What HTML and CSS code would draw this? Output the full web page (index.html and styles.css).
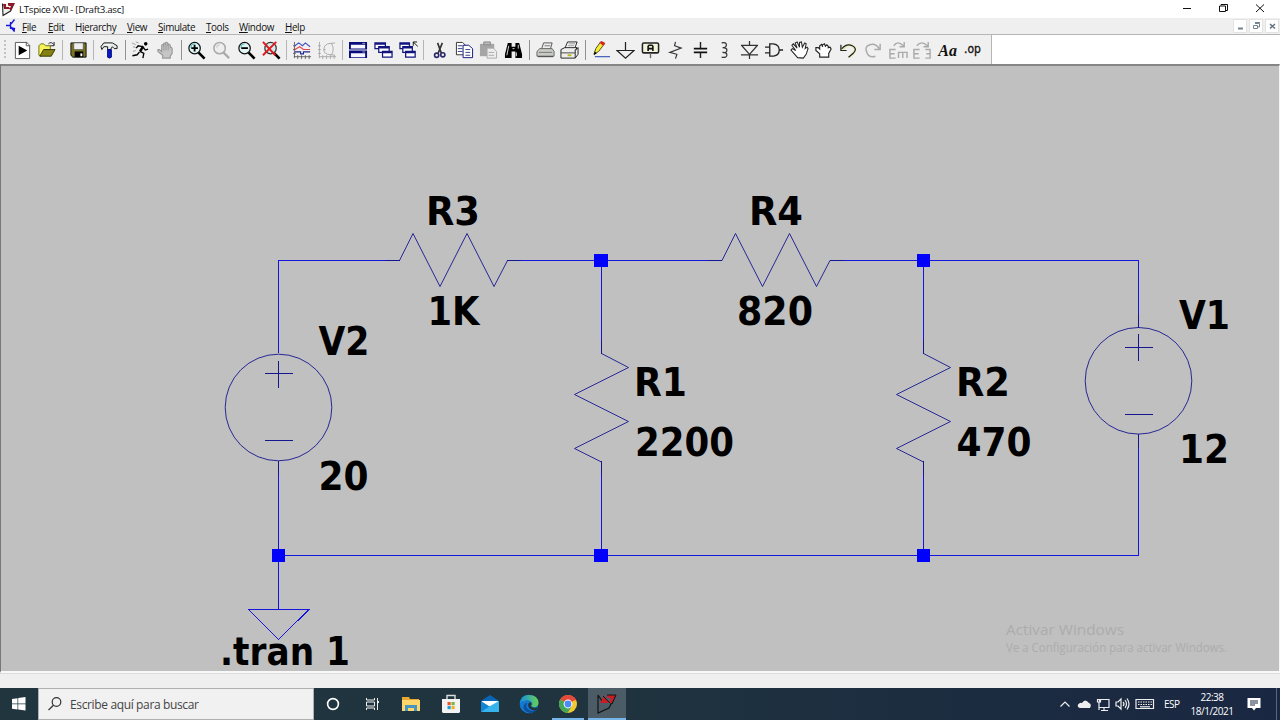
FILE: index.html
```html
<!DOCTYPE html>
<html lang="es">
<head>
<meta charset="utf-8">
<title>LTspice XVII - [Draft3.asc]</title>
<link rel="stylesheet" href="styles.css">
</head>
<body>
<div class="app">
<header class="titlebar">
  <svg class="logo" width="14" height="16" viewBox="0 0 14 16"><path d="M1.5 2.5 2 14.5 9.5 10 13 2.5" fill="#eee" stroke="#222" stroke-width="1.1"/><path d="M2 3H5L5 6H9V8H3ZM7 2H14L12.5 4.5 10 10 8.5 8 10 5H7Z" fill="#8e1824"/><path d="M5 2 9 7" stroke="#fff" stroke-width=".7"/></svg>
  <span class="title">LTspice XVII - [Draft3.asc]</span>
  <svg class="window-controls" width="90" height="18" viewBox="0 0 90 18" fill="none" stroke="#111"><path d="M3 8.5H11"/><path d="M39.5 6H45.5V11.5H39.5ZM41 5.5V4.5H47.5V10.5H46"/><path d="m76 4.500 8 7.500m0-7.500-8 7.500"/></svg>
</header>
<nav class="menubar">
  <svg class="doc-icon" width="12" height="16" viewBox="0 0 12 16" fill="none" stroke="#1515d8" stroke-width="1.3"><path d="M1 7.500H5M5.500 4V11M6 6 9.500 1.500M6 9 9.500 13.500"/><path d="m6.500 10 3 .5-.5 2Z" fill="#1515d8"/></svg>
  <span class="m1"><u>F</u>ile</span><span class="m2"><u>E</u>dit</span><span class="m3">H<u>i</u>erarchy</span><span class="m4"><u>V</u>iew</span><span class="m5"><u>S</u>imulate</span><span class="m6"><u>T</u>ools</span><span class="m7"><u>W</u>indow</span><span class="m8"><u>H</u>elp</span>
  <div class="child-controls">
    <i><svg width="13" height="14" viewBox="0 0 13 14"><path d="M4 9.500H9" stroke="#748291" stroke-width="2"/></svg></i>
    <i><svg width="13" height="14" viewBox="0 0 13 14" fill="none" stroke="#748291"><path d="M3.500 6.500H7.500V9.500H3.500ZM5 4.500H9.500V8H8M5 3.500H10"/></svg></i>
    <i><svg width="13" height="14" viewBox="0 0 13 14"><path d="m4 5 5 4.500M9 5 4 9.500" stroke="#667585" stroke-width="1.600"/></svg></i>
  </div>
</nav>
<div class="toolbar"><div class="tools">
  <b class="grip"></b>
  <span class="tool"><svg viewBox="0 0 20 20"><path d="M2.500 1.500H14.500L17.500 4.500V18.500H2.500Z" fill="#fff" stroke="#555"/><path d="M14 1V5H18" fill="none" stroke="#555"/><path d="M6 5V15L15 10Z"/></svg></span>
  <span class="tool"><svg viewBox="0 0 20 20"><path d="M2 15V5L4 3H7L9 5H14V9H8L4 16Z" fill="#f7f35a" stroke="#6f6f10"/><path d="M7 9H19L15 16H3Z" fill="#858014" stroke="#383800"/><path d="M12 3Q15 0 18 4M18 1V5H14" fill="none" stroke="#222"/></svg></span>
  <i class="sep light"></i>
  <span class="tool"><svg viewBox="0 0 20 20"><path d="M2 2H18V17H4L2 15Z" fill="#77731c" stroke="#111"/><path d="M5 2H15V9H5Z" fill="#eee" stroke="#444" stroke-width=".6"/><path d="M6 11H15V17H6Z"/><path d="M12 13H14V16H12Z" fill="#fff"/></svg></span>
  <i class="sep light"></i>
  <span class="tool"><svg viewBox="0 0 20 20"><path d="M1 6 4 2H13L18 5V8H15L13 6 11 9H8V6H4L2 9Z" fill="#e6ebeb" stroke="#111"/><path d="M8 9H12V17Q10 19 8 17Z" fill="#0918ce" stroke="#001378"/><path d="M6 4H12" stroke="#fff"/></svg></span>
  <i class="sep"></i>
  <span class="tool"><svg viewBox="0 0 20 20"><circle cx="15.500" cy="3" r="1.900"/><path d="M13 5.500 9.500 11" stroke="#000" stroke-width="2.600"/><path d="m9.500 11 4 2-1 5M9 11.500l-2.500 3-5 1M12 6 7.500 5 5.500 7.500M13 7l2 2.500 3-1" fill="none" stroke="#000" stroke-width="1.400"/><path d="m1 2 4 2M2 6l3 1M5 1l3 1M2 11l3-1" stroke="#888" fill="none" stroke-width=".8"/></svg></span>
  <span class="tool"><svg viewBox="0 0 20 20"><path d="M7 18V15L2 11V9H3.500L6 11V4.500Q7 3 8 4.500V3Q9 1.500 10 3V2Q11.500.5 12.500 2.500V4Q14 2.500 15 4.500V7Q16.500 6 17 8V13L15 16V18Z" fill="#c5c5c5" stroke="#999" stroke-width="1.200"/><path d="M8.300 4V10M10.500 3V10M12.800 4V10" stroke="#999" stroke-width="1"/></svg></span>
  <i class="sep"></i>
  <span class="tool"><svg viewBox="0 0 20 20"><path d="m12 12 6.500 6.500" stroke="#000" stroke-width="2.800"/><circle cx="8" cy="7.500" r="6" fill="#e1f6f5" stroke="#111" stroke-width="1.300"/><path d="M4 7Q4 3 8 3" fill="none" stroke="#39bcbc"/><path d="M4.500 7.500H11.500M8 4V11" stroke="#000" stroke-width="1.900"/></svg></span>
  <span class="tool"><svg viewBox="0 0 20 20"><path d="m12 12 6 6" stroke="#aaa" stroke-width="2.400"/><circle cx="8" cy="7.500" r="6" fill="#eee" stroke="#aaa" stroke-width="1.600"/><path d="M5 7Q5 4 8 4" fill="none" stroke="#bbb"/></svg></span>
  <span class="tool"><svg viewBox="0 0 20 20"><path d="m12 12 6.500 6.500" stroke="#000" stroke-width="2.800"/><circle cx="8" cy="7.500" r="6" fill="#e1f6f5" stroke="#111" stroke-width="1.300"/><path d="M4 7Q4 3 8 3" fill="none" stroke="#39bcbc"/><path d="M4.500 7.500H11.500" stroke="#000" stroke-width="1.900"/></svg></span>
  <span class="tool"><svg viewBox="0 0 20 20"><path d="m12 12 6.500 6.500" stroke="#000" stroke-width="2.800"/><circle cx="9" cy="7.500" r="6" fill="#d2eceb" stroke="#333" stroke-width="1.300"/><path d="M1 1 14 15M15 1 1 15" stroke="#e3171c" stroke-width="2"/></svg></span>
  <i class="sep light"></i>
  <span class="tool"><svg viewBox="0 0 20 20"><path d="M1.500 1V18M1 16.500H19M0 5H3M0 9H3M0 13H3M5 15V19M9 15V19M13 15V19M17 15V19" stroke="#555" stroke-width=".9"/><g fill="none" stroke-width="1.200"><path d="m2 5 4-3 4 3 3-3 5 4" stroke="#4051c1"/><path d="M2 9 7 6l4 3h7" stroke="#e4454c"/><path d="M2 11.500H8V13.500H11V11.500H18" stroke="#1e298f"/></g></svg></span>
  <span class="tool"><svg viewBox="0 0 20 20" fill="none" stroke="#aaa"><path d="M1.500 1V18M1 16.500H19M0 5H3M0 9H3M0 13H3M5 15V19M9 15V19M13 15V19M17 15V19"/><path d="M18 2 10 3Q6 5 6 9T10 14L18 15M14 2Q18 9 14 15M6 9H8"/></svg></span>
  <i class="sep light"></i>
  <span class="tool"><svg viewBox="0 0 20 20"><path d="M0 1H19V9H0ZM0 10H19V18H0Z" fill="#070b7c"/><path d="M2 4H17V8H2ZM2 13H17V17H2Z" fill="#f7f7ff"/><path d="M14 2.500h3M14 11.500h3" stroke="#aaa"/></svg></span>
  <span class="tool"><svg viewBox="0 0 20 20"><g fill="#fff" stroke="#11147f" stroke-width="1.300"><path d="M1 2H12V8H1Z"/><path d="M5 6H16V12H5Z"/><path d="M9 11H19V17H9Z"/></g><path d="M1 3H12M5 7H16M9 12H19" stroke="#11147f" stroke-width="2"/></svg></span>
  <span class="tool"><svg viewBox="0 0 20 20"><g fill="#fff" stroke="#11147f" stroke-width="1.300"><path d="M1 2H11V8H1Z"/><path d="M4 6H14V12H4Z"/><path d="M7 11H17V17H7Z"/></g><path d="M1 3H11M4 7H14M7 12H17" stroke="#11147f" stroke-width="2"/><path d="M15 5V1H19M15 1 20 6" stroke="#111" fill="none"/></svg></span>
  <i class="sep light"></i>
  <span class="tool"><svg viewBox="0 0 20 20" fill="none" stroke="#292967" stroke-width="1.700"><path d="m8 2 4 11M13 2 8.500 13" stroke="#333"/><circle cx="7" cy="15" r="2.200"/><circle cx="13.500" cy="14.500" r="2.200"/></svg></span>
  <span class="tool"><svg viewBox="0 0 20 20"><g fill="#fff"><path d="M1.500 1.500H8L11 4.500V14.500H1.500Z" stroke="#333"/><path d="M8.500 4.500H14.500L18.500 8V17.500H8.500Z" stroke="#11147f"/></g><path d="M3 5H8M3 8H8M3 11H8M11 9H16M11 12H16M11 15H16" stroke="#333c83"/></svg></span>
  <span class="tool"><svg viewBox="0 0 20 20"><path d="M1 3H16V16H1Z" fill="#a5a5a5"/><path d="M5 1H12V4H5Z" fill="#bbb" stroke="#888"/><path d="M8.500 7.500H15L18.500 11V18H8.500Z" fill="#eee" stroke="#aaa"/><path d="M10 12H16M10 15H16" stroke="#aaa"/></svg></span>
  <span class="tool"><svg viewBox="0 0 20 20"><path d="M4 2H8V6H12V2H16L19 14V18H12V11H8V18H1V14Z"/><path d="M5 5 3 15M15 4V8M13 12V16M9 8H11" stroke="#ddd"/></svg></span>
  <i class="sep"></i>
  <span class="tool"><svg viewBox="0 0 20 20"><path d="M6 8 8 2H17L15 9" fill="#eee" stroke="#555"/><path d="M4 8H17L19 11V16H1V11Z" fill="#c8cac4" stroke="#666"/><path d="M3 12H17M9 5H15" stroke="#777"/><path d="M2 16.500H18" stroke="#444"/></svg></span>
  <span class="tool"><svg viewBox="0 0 20 20"><path d="M5 8 8 1H18L15 9" fill="#fff" stroke="#222"/><path d="m1 9 4-2H18L16 10V18H1ZM16 10 19 7V14L16 18" fill="#eee" stroke="#222"/><path d="M1 12.500H16" stroke="#444"/><path d="M9 3H16M8 5H15" stroke="#777" stroke-width=".8"/><path d="M8 15H12" stroke="#b6bb18" stroke-width="2"/></svg></span>
  <i class="sep"></i>
  <span class="tool"><svg viewBox="0 0 20 20"><path d="M2 14 4 8 9 1 13 3 7 11Z" fill="#f5ed36" stroke="#4e4a13"/><path d="m8 2 2-2 4 2-2 3Z" fill="#d8211d"/><path d="m2 15 1-4 2 2Z"/><path d="M3 16.500H19" stroke="#3655b8" stroke-width="1.200"/></svg></span>
  <span class="tool"><svg viewBox="0 0 20 20"><path d="M10 1V10M1 10H19L10 18Z" fill="none" stroke="#222" stroke-width="1.300"/></svg></span>
  <span class="tool"><svg viewBox="0 0 20 20"><rect x="1.500" y="2" width="17" height="10.500" rx="1.500" fill="#f1f3dc" stroke="#222" stroke-width="1.600"/><path d="M7.500 10.500V5.500L8.500 4.500H11.500L12.500 5.500V10.500M8 8H12" stroke="#111" stroke-width="1.700" fill="none"/><path d="M10 13V18" stroke="#666" stroke-width="1.400"/></svg></span>
  <span class="tool"><svg viewBox="0 0 20 20"><path d="M10 1 9 5 16 7.500 4 12 11.500 14 10 18.500" fill="none" stroke="#333" stroke-width="1.200"/></svg></span>
  <span class="tool"><svg viewBox="0 0 20 20"><path d="M10 1V8M10 12V18" stroke="#222" stroke-width="1.500"/><path d="M3 8H17M3 12H17" stroke="#111" stroke-width="2"/></svg></span>
  <span class="tool"><svg viewBox="0 0 20 20"><path d="M7 2Q12 1 12 4T8 7Q13 7 12.500 10T8 12Q13 12 12.500 15T7 17" fill="none" stroke="#333" stroke-width="1.300"/></svg></span>
  <span class="tool"><svg viewBox="0 0 20 20"><path d="M1 4.500H19M2 5 10 14 18 5M1 14.500H19M10 0V5M10 14V19" fill="none" stroke="#333" stroke-width="1.300"/></svg></span>
  <span class="tool"><svg viewBox="0 0 20 20"><path d="M0 6.500H5M0 12.500H5M5 3H9Q15 4 15 9.500T9 16H5ZM15 9.500H19" fill="none" stroke="#222" stroke-width="1.400"/></svg></span>
  <span class="tool"><svg viewBox="0 0 20 20"><path d="M8 17.500 5 14 1 9.500 2.500 8 6 10 2 4.500 3.500 3 7.500 7.500 5.500 2 7.500 1 10 6.500V1.500L12 1 13 6.500 15.500 2 17 3 16 8 18 6.500 19 8 17 14 14 18Z" fill="#fff" stroke="#222" stroke-width="1.100"/></svg></span>
  <span class="tool"><svg viewBox="0 0 20 20"><path d="M6 17V13.500L2 10V7L4.500 7 6 8.500V5L8 3.500 9 6V4L11 3 12 5.500 13.500 4 15 5.500V7L17 6.500 18 8.500 15.500 13V17Z" fill="#fff" stroke="#222" stroke-width="1.200"/></svg></span>
  <span class="tool"><svg viewBox="0 0 20 20" fill="none"><path d="M4 9Q9 2 14 5T15 13L11 17" stroke="#e5e69c" stroke-width="2.400"/><path d="M3 8Q8 2 14 5T15 13L10 17M2 4V10H8" stroke="#222" stroke-width="1.300"/></svg></span>
  <span class="tool"><svg viewBox="0 0 20 20" fill="none" stroke="#aaa" stroke-width="1.500"><path d="M16 8Q12 2 6 4T3 12Q5 18 12 16M17 3V9H11"/></svg></span>
  <span class="tool"><svg viewBox="0 0 20 20" fill="none" stroke="#aaa" stroke-width="1.500"><path d="M7 9H1V18H7M1 13.500H6M10 18V12H19V18M14.500 12V18M5 5Q9-1 15 5M16 1V6H11"/></svg></span>
  <span class="tool"><svg viewBox="0 0 20 20" fill="none" stroke="#aaa" stroke-width="1.500"><path d="M7 9H1V18H7M1 13.500H6M13 9H18V18H13M18 13.500H14M4 5Q9-1 15 5M16 1V6H11"/></svg></span>
  <span class="tool aa">Aa</span>
  <span class="tool op">.op</span>
</div></div>
<main class="workspace">
<svg class="schematic" width="1278" height="605" viewBox="1 66 1278 605">
  <g class="wire"><path d="M278.500 353V260.500H386M520 260.500H709M843 260.500H1138.500V314M278.500 474V608.500M278.500 555.500H1138.500V447M601.500 260V340M601.500 475V555M923.500 260V340M923.500 475V555"/></g>
  <g class="part straight"><path d="M386 260.500H400M507 260.500H521M708 260.500H722M830 260.500H844M601.500 340V354M601.500 461V475M923.500 340V354M923.500 461V475M278.500 461V475M1138.500 314V328M1138.500 434V448"/>
  <path d="M265 373.500H293M278.500 361V388M265 440.500H293M1125 347.500H1153M1138.500 334V361M1125 414.500H1153"/></g>
  <g class="part"><path d="m399.500 260.500 13.500-27 27 53 27-53 27 53 13.500-26M722 260.500l13.500-27 27 53 27-53 27 53 13.500-26"/>
  <path d="m601.500 353.500 27 14-54 27 54 27-54 27 27 13.500M923.500 353.500l27 14-54 27 54 27-54 27 27 13.500"/>
  <circle cx="278.500" cy="407.500" r="53.300"/><circle cx="1138.500" cy="380.800" r="53.300"/></g>
  <path class="wire" d="M248.500 609.500H309L278.500 639.500Z"/>
  <path class="node" d="M594 254h14v13h-14zM917 254h13v13h-13zM272 549h13v13h-13zM594 549h14v13h-14zM917 549h13v13h-13z"/>
  <g class="labels">
   <text x="426" y="225" textLength="54" lengthAdjust="spacingAndGlyphs">R3</text><text x="427.500" y="325" textLength="52" lengthAdjust="spacingAndGlyphs">1K</text>
   <text x="749" y="225" textLength="54" lengthAdjust="spacingAndGlyphs">R4</text><text x="737" y="325" textLength="76" lengthAdjust="spacingAndGlyphs">820</text>
   <text x="318.500" y="355" textLength="51" lengthAdjust="spacingAndGlyphs">V2</text><text x="318.500" y="490" textLength="50" lengthAdjust="spacingAndGlyphs">20</text>
   <text x="634" y="396" textLength="53" lengthAdjust="spacingAndGlyphs">R1</text><text x="635" y="456" textLength="99" lengthAdjust="spacingAndGlyphs">2200</text>
   <text x="956" y="396" textLength="54" lengthAdjust="spacingAndGlyphs">R2</text><text x="956.500" y="456" textLength="75" lengthAdjust="spacingAndGlyphs">470</text>
   <text x="1179" y="329" textLength="51" lengthAdjust="spacingAndGlyphs">V1</text><text x="1179" y="463" textLength="50" lengthAdjust="spacingAndGlyphs">12</text>
   <text x="220" y="665" textLength="130" lengthAdjust="spacingAndGlyphs">.tran 1</text>
  </g>
  <g class="activation"><text x="1006" y="635" font-size="15" textLength="118" lengthAdjust="spacingAndGlyphs">Activar Windows</text><text x="1006" y="652" font-size="12" textLength="221" lengthAdjust="spacingAndGlyphs">Ve a Configuración para activar Windows.</text></g>
</svg>
</main>
<div class="statusbar"></div>
<footer class="taskbar">
  <div class="start"><svg width="14" height="14" viewBox="0 0 14 14"><path d="M0 2 5.500 1.200V6.500H0ZM6.200 1.100 13.500 0V6.500H6.200ZM0 7.200H5.500V12.500L0 11.800ZM6.200 7.200H13.500V13.600L6.200 12.600Z" fill="#fff"/></svg></div>
  <div class="search"><svg width="16" height="16" viewBox="0 0 16 16" fill="none" stroke="#333" stroke-width="1.200"><circle cx="9.500" cy="6" r="4.300"/><path d="M6.500 9.200 1.500 14"/></svg><span>Escribe aquí para buscar</span></div>
  <div class="apps">
   <span class="app-btn"><svg viewBox="0 0 20 20"><circle cx="10" cy="10" r="5.400" fill="none" stroke="#fff" stroke-width="1.600"/></svg></span>
   <span class="app-btn"><svg viewBox="0 0 20 20" fill="none" stroke="#eee"><path d="M4.500 4V6H12.500V4M4.500 16V14H12.500V16M4.500 8H12.500V12H4.500ZM15.500 4V16"/><path d="M15 7H17V9H15Z" fill="#eee" stroke="none"/></svg></span>
   <span class="app-btn"><svg viewBox="0 0 20 20"><path d="M1 3H8L9 5H18V16H1Z" fill="#e6a831"/><path d="M1 6H19V17H1Z" fill="#ffd66b"/><path d="M4 17V11H16V17H13V14H7V17Z" fill="#4696c2"/></svg></span>
   <span class="app-btn"><svg viewBox="0 0 20 20"><path d="M6 6V1.500H14V6" fill="none" stroke="#ddd" stroke-width="1.400"/><path d="M1 5H19V18L18 19H2L1 18Z" fill="#f3f3f3"/><path d="M6.500 8H9.700V11.200H6.500Z" fill="#f05324"/><path d="M10.500 8H13.700V11.200H10.500Z" fill="#7cb83b"/><path d="M6.500 12H9.700V15.200H6.500Z" fill="#1ba1df"/><path d="M10.500 12H13.700V15.200H10.500Z" fill="#f2b51b"/></svg></span>
   <span class="app-btn"><svg viewBox="0 0 20 20"><path d="M1 7 10 1 19 7V18H1Z" fill="#0865b7"/><path d="M2 7H18V13H2Z" fill="#fff"/><path d="M1 7 12 14 1 18Z" fill="#1385d4"/><path d="M19 7V18H1L10 12Z" fill="#38b4ed"/></svg></span>
   <span class="app-btn"><svg viewBox="0 0 20 20"><defs><linearGradient id="edge"><stop stop-color="#168ee2"/><stop offset="1" stop-color="#66d354"/></linearGradient></defs><circle cx="10" cy="10" r="9.300" fill="#1479ce"/><path d="M1 10Q1 1 10 1 19 1 19.500 9 19 14 13 13 11 12 13 9 10 4 5 7 1 8 1 10Z" fill="url(#edge)"/><path d="M8 9Q5 15 13 17L18 15Q15 19 11 19 3 17 5 11 6 9 8 9Z" fill="#0b4e9b"/><path d="M11 8Q14 9 12 12 14 15 19 13L17 16Q9 17 9 10Z" fill="#203745"/></svg></span>
   <span class="app-btn running"><svg viewBox="0 0 20 20"><circle cx="10" cy="10" r="9" fill="#f4c631"/><path d="M10 10 2.200 5.500A9 9 0 0 1 17.800 5.500Z" fill="#e44a3b"/><path d="M10 10 2.200 5.500A9 9 0 0 0 9.500 19L14 12Z" fill="#43a65a"/><path d="M10 5.500H17.800" stroke="#e44a3b" stroke-width="1.500"/><circle cx="10" cy="10" r="4.400" fill="#fff"/><circle cx="10" cy="10" r="3.400" fill="#4c8bf5"/></svg></span>
   <span class="app-btn active"><svg viewBox="0 0 20 20"><path d="M1 1V19L12 14 18 2M1 1 5 7" fill="none" stroke="#111" stroke-width="1.200"/><path d="M3 9 6 4V1L10 6 12 9ZM10 1H19L15 9H12L14 4H10Z" fill="#c81b23"/><path d="m6 2 7 7M10 1H19L15 10" fill="none" stroke="#151515"/></svg></span>
  </div>
  <div class="tray">
   <svg width="102" height="22" viewBox="1058 693 102 22" fill="none" stroke="#eee" stroke-width="1.200"><path d="m1060.500 706.500 4.500-4.500 4.500 4.500"/><path d="M1080 708Q1077 707 1078 704.500 1080 702 1082 703 1085 698 1089 703 1092 704 1090 708Z" fill="#eee" stroke="none"/><path d="M1099.500 702V699.500H1109V707.500H1099.500M1104 708V710.500M1101 710.500H1108M1097.500 699.500H1100.500V702H1097.500ZM1099 702V710"/><path d="M1116 702H1118L1121 699V709L1118 706H1116ZM1123 702Q1125 704 1123 706M1125 700Q1128 704 1125 708M1127 698.500Q1131 704 1127 709.500"/><path d="M1136 699.500H1153.500V708.500H1136Z"/><path d="M1138 702H1152M1138 704.500H1152" stroke-dasharray="1.500 1"/><path d="M1140 706.800H1150"/></svg>
   <span class="lang">ESP</span>
   <span class="clock"><span>22:38</span><span>18/1/2021</span></span>
   <svg class="notice" width="14" height="14" viewBox="0 0 14 14"><path d="M.5 1H13.500V11H9L7 13.500 5 11H.5Z" fill="#fff"/><path d="M3 4H11M3 6H11M3 8H8" stroke="#1b2842"/></svg>
   <i class="peek"></i>
  </div>
</footer>
</div>
</body>
</html>
```

FILE: styles.css
```css
* { box-sizing: border-box; }
body { margin: 0; overflow: hidden; font-family: "Open Sans", "Noto Sans", sans-serif; color: #111; }
svg { display: block; flex: none; }
i { font-style: normal; }
.app { width: 1280px; height: 720px; display: grid; grid-template-rows: 18px 17px 29px 609px 15px 32px; }
.titlebar { background: #fff; display: flex; align-items: center; padding-left: 1px; }
.logo { margin-right: 4px; }
.title { font-size: 9.800px; line-height: 19px; padding-top: 1px; letter-spacing: -.35px; white-space: nowrap; }
.window-controls { margin-left: auto; margin-right: 10px; }
.menubar { background: #efefef; border-bottom: 1px solid #b6b6b6; display: flex; align-items: center; padding-left: 5px; font-size: 9.900px; line-height: 16px; letter-spacing: -.38px; white-space: nowrap; }
.doc-icon { margin-right: 5px; }
.menubar > span { flex: none; padding-top: 1px; }
.menubar u { text-underline-offset: 1px; text-decoration-thickness: 1px; }
.m1 { width: 26px; } .m2 { width: 27px; } .m3 { width: 52px; } .m4 { width: 31px; }
.m5 { width: 48px; } .m6 { width: 33px; } .m7 { width: 46px; } .m8 { width: 25px; }
.child-controls { display: flex; gap: 2px; margin-left: auto; padding-right: 1px; }
.child-controls i { width: 14px; height: 14px; background: #fff; border: 1px solid #e3e3e3; display: flex; align-items: center; justify-content: center; }
.toolbar { background: #fff; }
.tools { width: 992px; height: 29px; background: #f0f0f0; border-right: 1px solid #b5b5b5; display: flex; align-items: center; }
.grip { width: 2px; height: 20px; margin: 0 3.700px 0 4px; background: repeating-linear-gradient(#c2c2c2 0 2px, #f0f0f0 2px 4px); flex: none; }
.tool { width: 24.750px; height: 19px; padding-top: 1px; display: flex; justify-content: center; flex: none; }
.tool svg { width: 19px; height: 19px; }
.sep { width: 1px; height: 20px; margin: 0 2.800px; background: #929292; flex: none; }
.sep.light { background: #b5b5b5; }
.aa { font: italic bold 16px/19px "Liberation Serif", serif; }
.op { font: 12px/16px "DejaVu Sans Condensed", "DejaVu Sans", sans-serif; -webkit-text-stroke: .3px #111; }
.workspace { background: #c0c0c0; border: 1px solid #777; border-top: 2px solid #858585; border-right-color: #f5f5f5; border-bottom: 2px solid #f8f8f8; }
.schematic { overflow: visible; }
.wire { fill: none; stroke: #1515dc; shape-rendering: crispEdges; }
.part { fill: none; stroke: #151590; stroke-width: .9; }
.straight { shape-rendering: crispEdges; stroke-width: 1; }
.node { fill: #0000ff; }
.labels { font: bold 38.500px "DejaVu Sans", sans-serif; fill: #000; }
.activation { font-family: "Open Sans", "Noto Sans", sans-serif; fill: #acacac; }
.statusbar { background: #efefef; border-top: 1px solid #ddd; }
.taskbar { display: flex; color: #fff; background: linear-gradient(90deg, #20353e, #20343f 45%, #1b2b40 80%, #1a2742); }
.start { width: 38px; display: flex; align-items: center; justify-content: center; }
.search { width: 276px; background: #f1f1f1; border: 1px solid #b0b0b0; color: #444; font-size: 12px; display: flex; align-items: center; padding-left: 8px; letter-spacing: -.36px; }
.search svg { margin-right: 7px; }
.apps { display: flex; gap: 1.200px; }
.app-btn { width: 38px; height: 32px; display: flex; align-items: center; justify-content: center; flex: none; }
.app-btn svg { width: 20px; height: 20px; }
.running { border-bottom: 2px solid #76b5e9; padding-top: 2px; width: 32px; margin: 0 3px; }
.active { background: #4c5c67; border-bottom: 2px solid #76b5e9; padding-top: 2px; }
.tray { margin-left: auto; display: flex; align-items: center; font-size: 10px; }
.lang { width: 22px; margin-left: 4px; letter-spacing: -.5px; }
.clock { width: 52px; display: flex; flex-direction: column; text-align: center; line-height: 14px; letter-spacing: -.5px; }
.notice { margin-left: 9px; }
.peek { width: 1px; height: 32px; background: #58657a; margin: 0 3px 0 15px; }
```
